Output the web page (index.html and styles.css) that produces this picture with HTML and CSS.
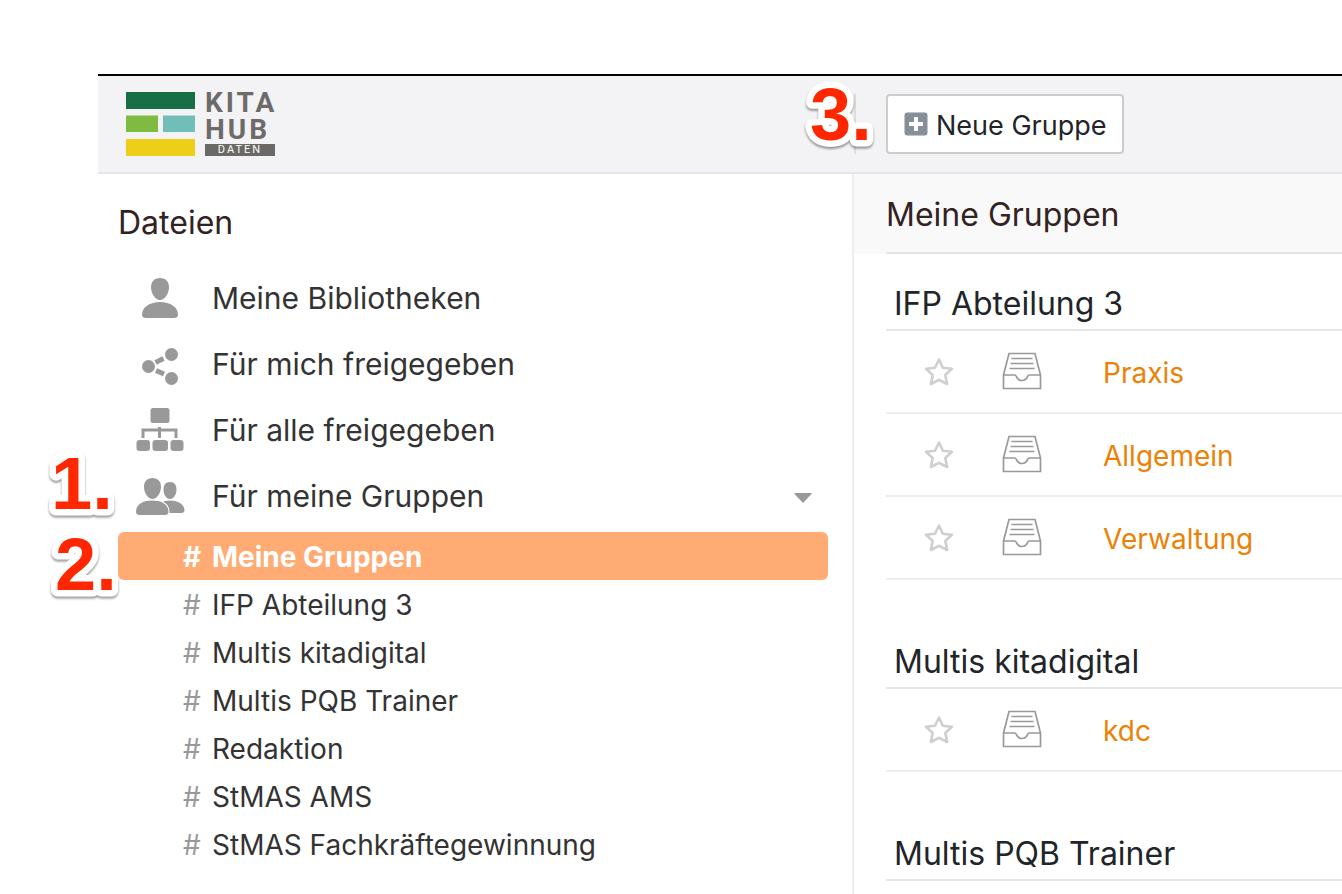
FILE: index.html
```html
<!DOCTYPE html>
<html lang="de">
<head>
<meta charset="utf-8">
<title>Meine Gruppen</title>
<link rel="stylesheet" href="styles.css">
</head>
<body>
<svg class="sprite" aria-hidden="true">
  <symbol id="star" viewBox="0 0 30 30"><path d="M15 2.500l3.900 8.200 9 1.100-6.600 6.200 1.800 9L15 22.900l-8.100 4.100 1.800-9L2 11.800l9-1.100z" fill="none" stroke="#cfcfcf" stroke-width="2.600" stroke-linejoin="round"/></symbol>
  <symbol id="library" viewBox="0 0 40 38"><g fill="none" stroke="#999" stroke-width="1.700"><path d="M1.500 23L7 1.500h26L38.500 23v13.500h-37V23H13c1.800 0 1.200 5.500 7 5.500s5.200-5.500 7-5.500h11.500"/><path d="M9.500 6.500h21M8.500 11.500h23M7.500 16.500h25"/></g></symbol>
</svg>
<div class="app">
  <header class="topbar">
    <div class="brand">
      <a class="logo" href="#" aria-label="Kita Hub Daten">
        <svg class="logo-mark" viewBox="0 0 69 64" aria-hidden="true"><path fill="#196f45" d="M0 0h69v17H0z"/><path fill="#7fba41" d="M0 23.500h32V40H0z"/><path fill="#71beb8" d="M37 23.500h32V40H37z"/><path fill="#eccf16" d="M0 47h69v17H0z"/></svg>
        <span class="logo-text"><span>KITA</span><span>HUB</span><small>DATEN</small></span>
      </a>
    </div>
    <div class="toolbar">
      <button class="new-group" type="button">
        <svg class="plus" viewBox="0 0 24 24" aria-hidden="true"><rect x="0.500" y="0.500" width="23" height="23" rx="3" fill="#868e99"/><path d="M12 5v14M5 12h14" stroke="#fff" stroke-width="4"/></svg>
        <span class="label">Neue Gruppe</span>
      </button>
    </div>
  </header>
  <div class="columns">
    <nav class="sidebar">
      <h2 class="side-title">Dateien</h2>
      <ul class="nav">
        <li><a class="nav-link" href="#"><svg class="nav-icon" viewBox="0 0 50 48" fill="#999" aria-hidden="true"><path d="M25 4c6 0 9 4 9 9.500S30 26 25 26s-9-7-9-12.500S19 4 25 4z"/><path d="M25 28c10 0 18 5 18 13 0 2-2 3-4 3H11c-2 0-4-1-4-3 0-8 8-13 18-13z"/></svg>Meine Bibliotheken</a></li>
        <li><a class="nav-link" href="#"><svg class="nav-icon" viewBox="0 0 50 48" fill="#999" aria-hidden="true"><circle cx="13.500" cy="26.500" r="6.500"/><circle cx="36.500" cy="14.500" r="6.500"/><circle cx="36.500" cy="38.500" r="6.500"/><path d="M20.500 22.500l8-4M21 30.500l8 3.500" stroke="#999" stroke-width="5"/></svg>Für mich freigegeben</a></li>
        <li><a class="nav-link" href="#"><svg class="nav-icon" viewBox="0 0 50 48" fill="#999" aria-hidden="true"><rect x="15.500" y="2" width="19" height="15" rx="2.500"/><path d="M8 32v-8h33v8M24.500 21v11" fill="none" stroke="#999" stroke-width="3"/><rect x="1.500" y="34" width="13.500" height="11" rx="3"/><rect x="17.500" y="34" width="15.500" height="11" rx="3"/><rect x="35.500" y="34" width="13" height="11" rx="3"/></svg>Für alle freigegeben</a></li>
        <li><a class="nav-link" href="#"><svg class="nav-icon" viewBox="0 0 50 48" fill="#999" aria-hidden="true"><path d="M35 10c4.500 0 6.500 3 6.500 7.500S39 27 35 27s-6.500-5-6.500-9.500S30.500 10 35 10zM30 29c10-2 19.500 2 19.500 9.500 0 1.500-1.500 2.500-3 2.500H34.500c0-6-2-9-6.500-11z"/><path d="M17.500 6c5.500 0 8.500 3.500 8.500 9S22 27 17.500 27 9 20.500 9 15s3-9 8.500-9zM17 28.500c10 0 16.500 4 16.500 11.500 0 2-1.500 3-3.500 3H4.500c-2 0-3.500-1-3.500-3 0-7.500 6.500-11.500 16-11.500z" stroke="#fff" stroke-width="1.500" paint-order="stroke"/></svg>Für meine Gruppen<svg class="caret" viewBox="0 0 18 10" aria-hidden="true"><path fill="#999" d="M1 0h16q1 0 .500 1L9 10 .500 1Q0 0 1 0z"/></svg></a></li>
      </ul>
      <ul class="subnav">
        <li><a class="sub-link active" href="#"><span class="hash">#</span>Meine Gruppen</a></li>
        <li><a class="sub-link" href="#"><span class="hash">#</span>IFP Abteilung 3</a></li>
        <li><a class="sub-link" href="#"><span class="hash">#</span>Multis kitadigital</a></li>
        <li><a class="sub-link" href="#"><span class="hash">#</span>Multis PQB Trainer</a></li>
        <li><a class="sub-link" href="#"><span class="hash">#</span>Redaktion</a></li>
        <li><a class="sub-link" href="#"><span class="hash">#</span>StMAS AMS</a></li>
        <li><a class="sub-link" href="#"><span class="hash">#</span>StMAS Fachkräftegewinnung</a></li>
      </ul>
    </nav>
    <main class="content">
      <div class="content-head"><h1 class="page-title">Meine Gruppen</h1></div>
      <section class="group">
        <h2 class="group-title">IFP Abteilung 3</h2>
        <ul class="libs">
          <li class="lib"><button class="star" type="button" aria-label="Praxis markieren"><svg><use href="#star"/></svg></button><svg class="lib-icon"><use href="#library"/></svg><a href="#">Praxis</a></li>
          <li class="lib"><button class="star" type="button" aria-label="Allgemein markieren"><svg><use href="#star"/></svg></button><svg class="lib-icon"><use href="#library"/></svg><a href="#">Allgemein</a></li>
          <li class="lib"><button class="star" type="button" aria-label="Verwaltung markieren"><svg><use href="#star"/></svg></button><svg class="lib-icon"><use href="#library"/></svg><a href="#">Verwaltung</a></li>
        </ul>
      </section>
      <section class="group">
        <h2 class="group-title">Multis kitadigital</h2>
        <ul class="libs">
          <li class="lib"><button class="star" type="button" aria-label="kdc markieren"><svg><use href="#star"/></svg></button><svg class="lib-icon"><use href="#library"/></svg><a href="#">kdc</a></li>
        </ul>
      </section>
      <section class="group">
        <h2 class="group-title">Multis PQB Trainer</h2>
      </section>
    </main>
  </div>
</div>
<svg class="mark mark-one"><text x="10" y="71">1.</text></svg>
<svg class="mark mark-two"><text x="10" y="71">2.</text></svg>
<svg class="mark mark-three"><text x="10" y="71">3.</text></svg>
</body>
</html>
```
FILE: styles.css
```css
* { box-sizing: border-box; }
html { height: 100%; overflow: hidden; }
body {
  margin: 0;
  height: 100%;
  overflow: hidden;
  position: relative;
  padding: 74px 0 0 98px;
  display: flex;
  flex-direction: column;
  background: #fff;
  color: #333;
  font-family: Inter, "Liberation Sans", sans-serif;
  font-size: 28px;
}
h1, h2, ul { margin: 0; padding: 0; font-weight: 400; }
ul { list-style: none; }
a { text-decoration: none; color: inherit; }
svg { display: block; }
.sprite { position: absolute; width: 0; height: 0; }
.app { flex: 1; display: flex; flex-direction: column; min-height: 0; border-top: 2px solid #000; }
.topbar { display: flex; align-items: center; height: 98px; flex: none; background: #f3f3f5; border-bottom: 2px solid #e6e6e6; }
.brand { flex: 0 0 758px; height: 60px; display: flex; align-items: center; padding-left: 28px; border-right: 2px solid #ddd; }
.logo { display: flex; gap: 10px; }
.logo-mark { width: 69px; height: 64px; }
.logo-text { display: flex; flex-direction: column; width: 70px; color: #6d6b69; font: 700 28px/27px Roboto, sans-serif; letter-spacing: 3px; margin-top: -3px; }
.logo-text small { margin-top: 1px; background: #6b6965; color: #fff; font: 400 11px/12px Roboto, sans-serif; letter-spacing: 2px; text-align: center; }
.toolbar { padding-left: 30px; }
.new-group { display: flex; align-items: center; gap: 8px; height: 60px; padding: 0 16px; border: 2px solid #ccc; border-radius: 4px; background: #fff; color: #212529; font: inherit; font-size: 27px; }
.label { padding-top: 2px; }
.plus { width: 24px; height: 24px; }
.columns { flex: 1; display: flex; min-height: 0; }
.sidebar { flex: 0 0 756px; padding: 25px 24px 0 20px; border-right: 2px solid #eee; }
.side-title { font-size: 32px; line-height: 48px; color: #322; }
.nav { padding-top: 18px; }
.nav-link { display: flex; align-items: center; height: 66px; padding: 0 16px 0 17px; font-size: 30px; }
.nav-icon { width: 50px; height: 50px; margin-right: 27px; }
.caret { width: 18px; height: 10px; margin: 4px 0 0 auto; }
.subnav { padding-top: 3px; }
.sub-link { display: flex; align-items: center; height: 48px; padding: 2px 0 0 65px; border-radius: 6px; font-size: 28px; line-height: 46px; }
.hash { width: 29px; color: #999; }
.active { background: #ffab73; color: #fff; font-weight: 700; }
.active .hash { color: #fff; }
.content { flex: 1; min-width: 0; }
.content-head { height: 80px; padding-left: 32px; background: #f9f9f9; }
.page-title { height: 80px; line-height: 82px; font-size: 32px; color: #322; border-bottom: 2px solid #e6e6e6; }
.group { padding: 0 0 32px 32px; }
.group-title { height: 77px; padding: 26px 8px 0; font-size: 32px; line-height: 48px; color: #212529; border-bottom: 2px solid #e6e6e6; }
.lib { display: grid; grid-template-columns: 78px 101px 1fr; align-items: center; height: 83px; padding-left: 38px; border-bottom: 2px solid #eee; color: #eb8205; }
.lib a { padding-top: 2px; }
.star { width: 30px; height: 30px; padding: 0; border: 0; background: none; }
.star svg { width: 30px; height: 30px; }
.lib-icon { width: 40px; height: 38px; margin-bottom: 2px; }
.mark {
  position: absolute;
  width: 90px;
  height: 90px;
  overflow: visible;
  fill: #ff2600;
  stroke: #fff;
  stroke-width: 13px;
  stroke-linejoin: round;
  paint-order: stroke;
  font: 700 74px "Liberation Sans", Arial, sans-serif;
  filter: drop-shadow(0 2px 1px rgba(0, 0, 0, 0.4));
}
.mark-one { left: 41px; top: 438px; }
.mark-two { left: 45px; top: 519px; }
.mark-three { left: 800px; top: 69px; }
```
